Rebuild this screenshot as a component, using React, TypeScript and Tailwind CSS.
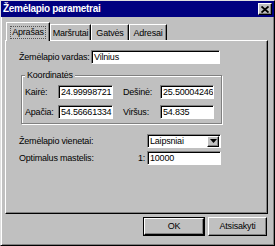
import React from "react";

const sunken =
  "bg-white border border-t-[#808080] border-l-[#808080] border-r-white border-b-white shadow-[inset_1px_1px_0_#000] flex items-center pl-[2px] text-black overflow-hidden";
const raised =
  "bg-[#c0c0c0] border border-t-white border-l-white border-r-black border-b-black shadow-[inset_-1px_-1px_0_#808080]";

function Field({ w, value }: { w: string; value: string }) {
  return <div className={`${sunken} ${w} h-[14px]`}>{value}</div>;
}

export default function App() {
  return (
    <div className="w-[275px] h-[246px] bg-[#c0c0c0] font-['Liberation_Sans',Arial,sans-serif] text-[9px] tracking-[-0.2px] leading-none whitespace-nowrap text-black flex flex-col border border-t-[#dfdfdf] border-l-[#dfdfdf] border-r-black border-b-black shadow-[inset_1px_1px_0_#fff,inset_-1px_-1px_0_#808080] overflow-hidden">
      {/* Title bar */}
      <div className="h-[16px] bg-[#000080] flex items-center justify-between pl-[2px] pr-[2px] shrink-0">
        <span className="text-white font-bold text-[10px] tracking-[-0.3px]">Žemėlapio parametrai</span>
        <div className={`${raised} w-[14px] h-[12px] flex items-center justify-center`}>
          <svg width="8" height="7" viewBox="0 0 8 7">
            <path d="M0.5 0.5 L7.5 6.5 M7.5 0.5 L0.5 6.5" stroke="#000" strokeWidth="1.8" />
          </svg>
        </div>
      </div>

      {/* Tabs */}
      <div className="mt-[5px] ml-[5px] flex items-end h-[18px] shrink-0">
        <div className="relative z-10 h-[19px] -mb-px w-[44px] bg-[#c0c0c0] border-t border-l border-t-white border-l-white border-r border-r-black shadow-[inset_-1px_0_0_#808080] flex items-center justify-center pt-[1px]">
          <span className="border border-dotted border-[#555] px-[1px] py-[1px]">Aprašas</span>
        </div>
        <div className="h-[16px] w-[41px] border-t border-l border-t-white border-l-white border-r border-r-black shadow-[inset_-1px_0_0_#808080] flex items-center justify-center pt-[1px]">
          Maršrutai
        </div>
        <div className="h-[16px] w-[38px] border-t border-l border-t-white border-l-white border-r border-r-black shadow-[inset_-1px_0_0_#808080] flex items-center justify-center pt-[1px]">
          Gatvės
        </div>
        <div className="h-[16px] w-[38px] border-t border-l border-t-white border-l-white border-r border-r-black shadow-[inset_-1px_0_0_#808080] flex items-center justify-center pt-[1px]">
          Adresai
        </div>
      </div>

      {/* Panel */}
      <div className="ml-[4px] w-[263px] h-[174px] shrink-0 border border-t-white border-l-white border-r-black border-b-black shadow-[inset_-1px_-1px_0_#808080] pl-[13px] flex flex-col">
        <div className="mt-[9px] flex items-center h-[14px]">
          <span className="w-[72px]">Žemėlapio vardas:</span>
          <Field w="w-[129px]" value="Vilnius" />
        </div>

        <div className="relative mt-[11px] ml-[2px] w-[201px] h-[49px] border border-[#808080] shadow-[inset_1px_1px_0_#fff,1px_1px_0_#fff] pt-[9px] pl-[3px] flex flex-col gap-[6px]">
          <span className="absolute -top-[5px] left-[3px] bg-[#c0c0c0] px-[2px]">Koordinatės</span>
          <div className="flex items-center h-[14px]">
            <span className="w-[33px]">Kairė:</span>
            <Field w="w-[55px]" value="24.99998721" />
            <span className="ml-[10px] w-[37px]">Dešinė:</span>
            <Field w="w-[54px]" value="25.50004246" />
          </div>
          <div className="flex items-center h-[14px]">
            <span className="w-[33px]">Apačia:</span>
            <Field w="w-[55px]" value="54.56661334" />
            <span className="ml-[10px] w-[37px]">Viršus:</span>
            <Field w="w-[54px]" value="54.835" />
          </div>
        </div>

        <div className="mt-[10px] flex items-center h-[14px]">
          <span className="w-[128px]">Žemėlapio vienetai:</span>
          <div className={`${sunken} w-[74px] h-[14px] justify-between pr-[1px]`}>
            <span>Laipsniai</span>
            <div className={`${raised} w-[12px] h-[11px] flex items-center justify-center`}>
              <svg width="7" height="4" viewBox="0 0 7 4">
                <path d="M0 0 H7 L3.5 4 Z" fill="#000" />
              </svg>
            </div>
          </div>
        </div>

        <div className="mt-[3px] flex items-center h-[14px]">
          <span className="w-[128px] flex justify-between pr-[2px]">
            <span>Optimalus mastelis:</span>
            <span>1:</span>
          </span>
          <Field w="w-[74px]" value="10000" />
        </div>
      </div>

      {/* Buttons */}
      <div className="mt-[3px] flex gap-[3px] pl-[142px] shrink-0">
        <div className="w-[62px] h-[19px] border border-black">
          <div className={`${raised} w-full h-full flex items-center justify-center`}>OK</div>
        </div>
        <div className={`${raised} w-[59px] h-[19px] flex items-center justify-center`}>Atsisakyti</div>
      </div>
    </div>
  );
}
